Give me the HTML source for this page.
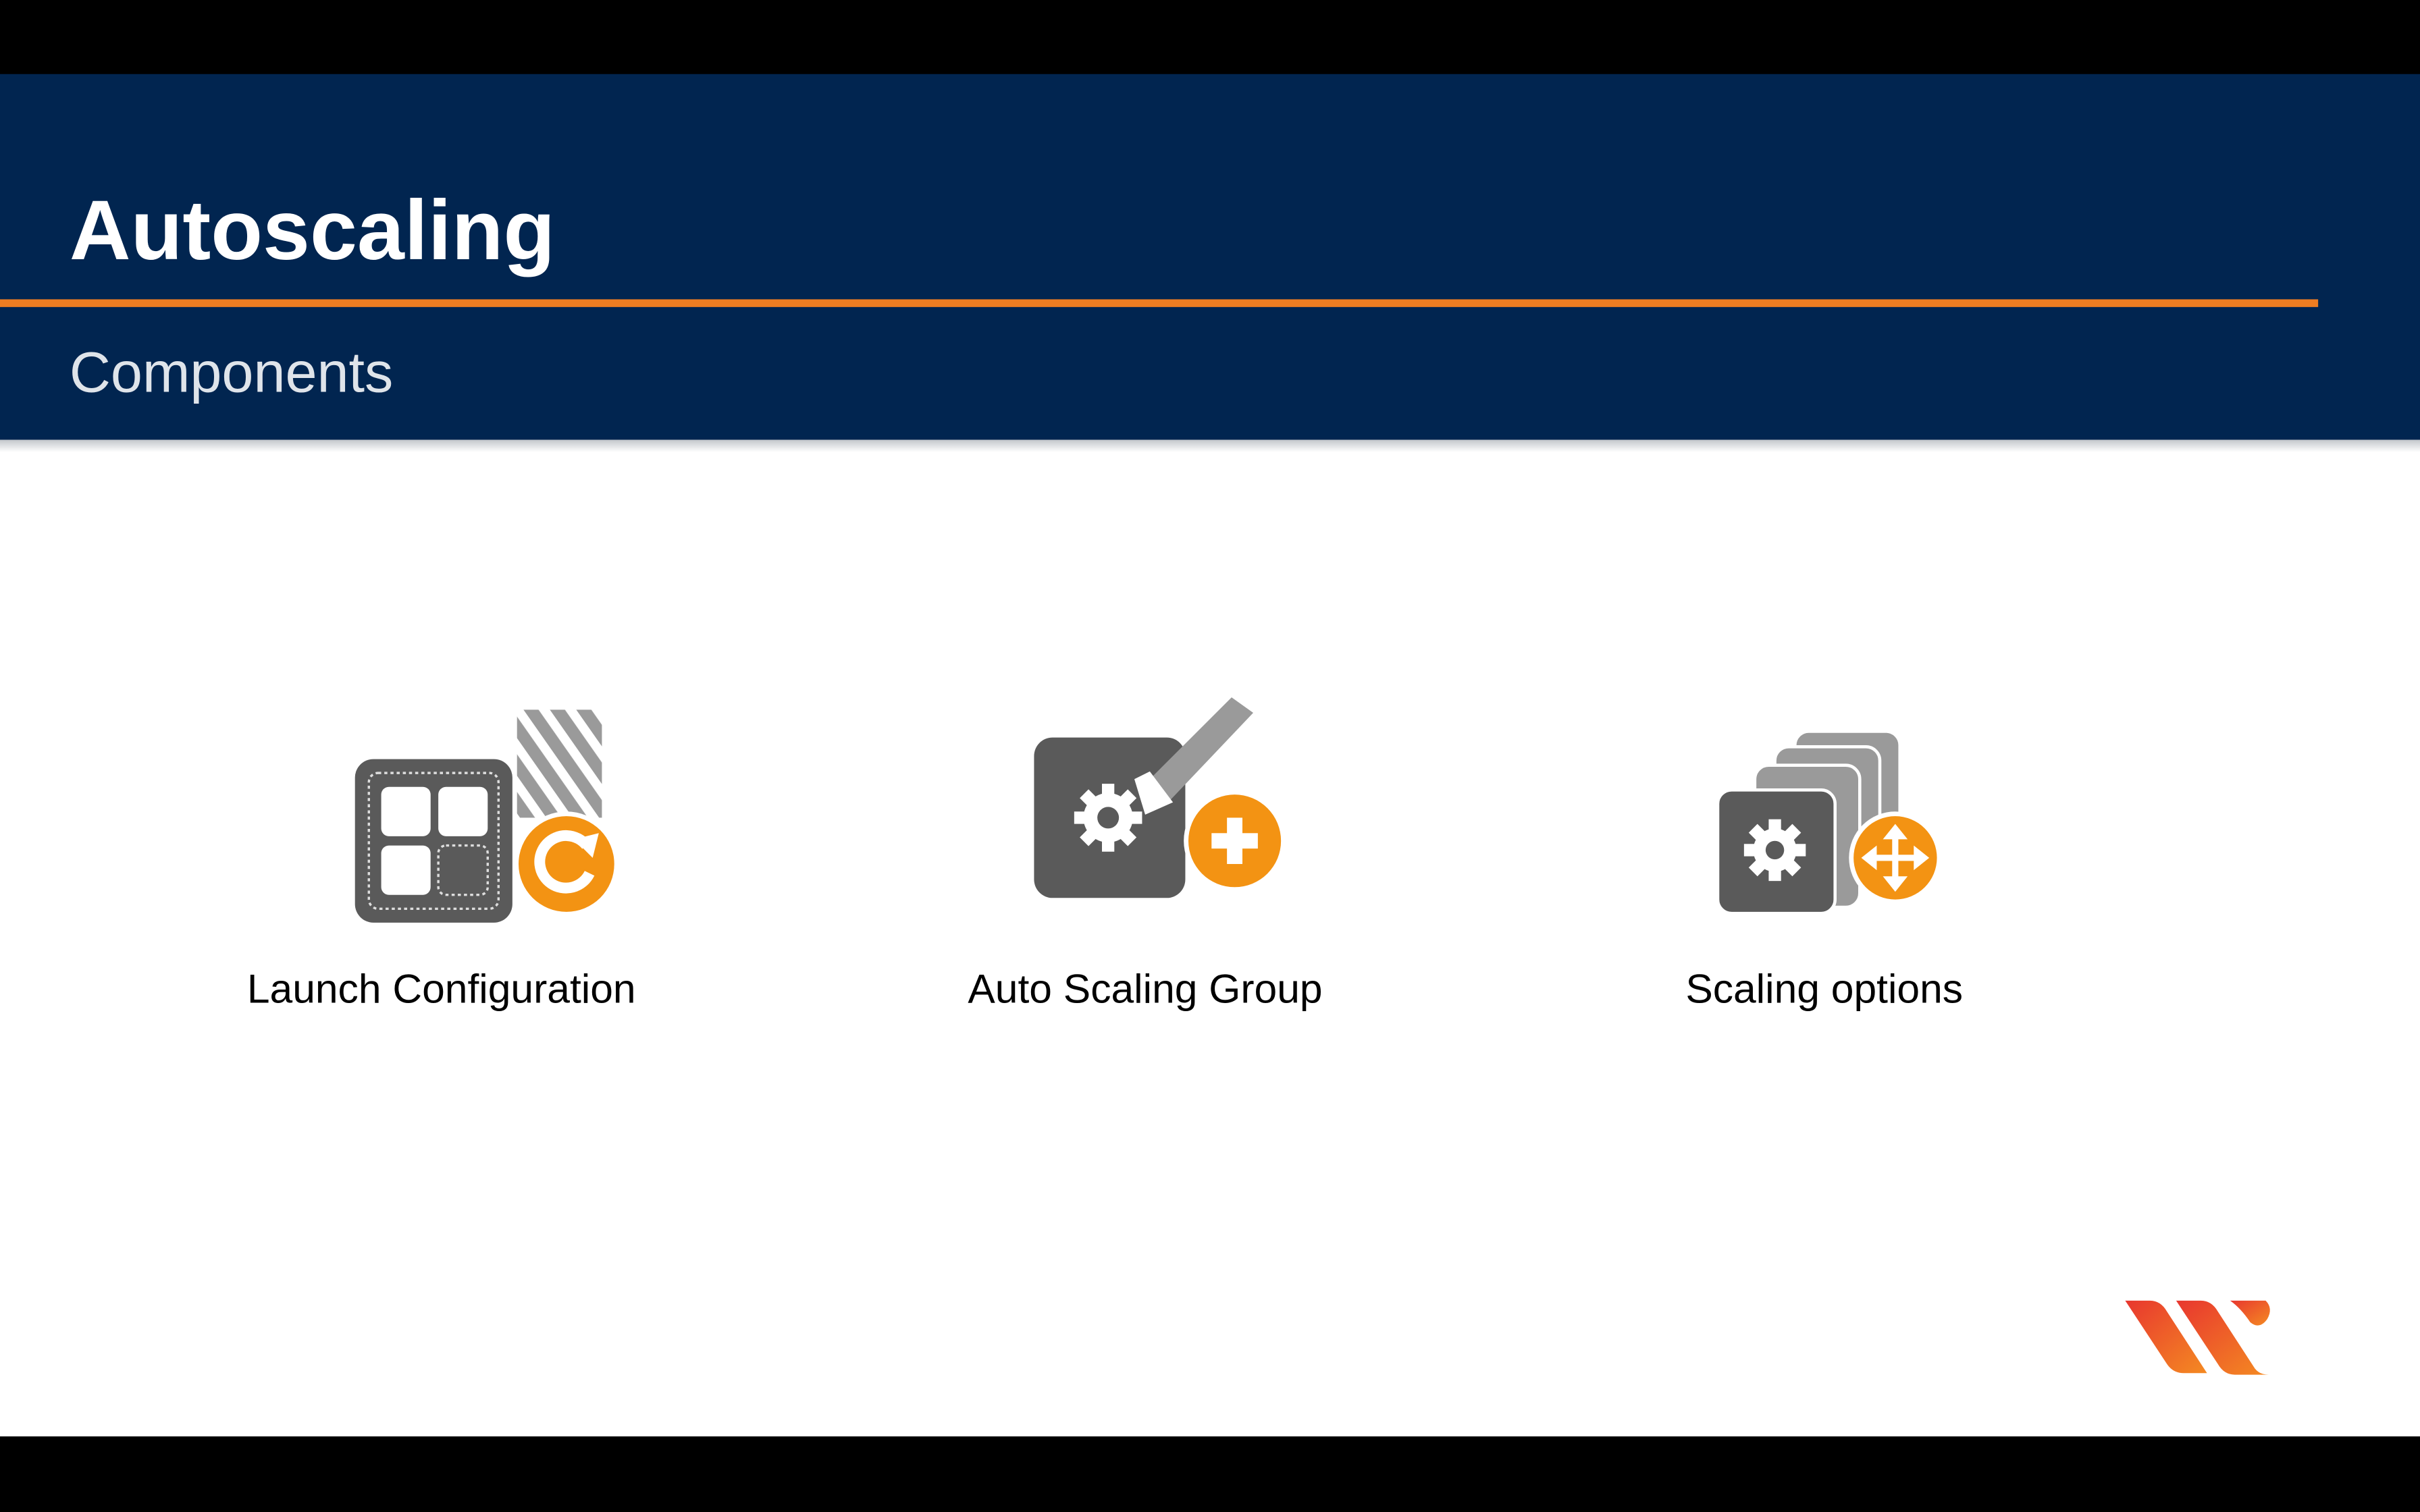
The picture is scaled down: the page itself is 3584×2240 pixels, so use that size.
<!DOCTYPE html>
<html><head><meta charset="utf-8"><style>
html,body{margin:0;padding:0;background:#000;}
svg{display:block}
</style></head><body>
<svg width="3584" height="2240" viewBox="0 0 1568 980" xmlns="http://www.w3.org/2000/svg">
<defs>
<linearGradient id="lg" x1="0" y1="0" x2="1" y2="1"><stop offset="0" stop-color="#e8372f"/><stop offset="1" stop-color="#f48a22"/></linearGradient>
<linearGradient id="sh" x1="0" y1="0" x2="0" y2="1"><stop offset="0" stop-color="#9aa0a8"/><stop offset="1" stop-color="#fff"/></linearGradient>
<pattern id="st" width="14" height="14" patternUnits="userSpaceOnUse" patternTransform="rotate(-35)"><rect width="14" height="14" fill="#fff"/><rect width="8" height="14" fill="#9a9a9a"/></pattern>
</defs>
<rect x="0" y="0" width="1568" height="980" fill="#000"/>
<rect x="0" y="285" width="1568" height="646" fill="#fff"/>
<rect x="0" y="285" width="1568" height="8" fill="url(#sh)" opacity="0.6"/>
<rect x="0" y="48" width="1568" height="237" fill="#012550"/>
<rect x="0" y="194" width="1502" height="5" fill="#ee7d22"/>
<text x="45" y="168" font-family="Liberation Sans, sans-serif" font-weight="bold" font-size="55" fill="#fff">Autoscaling</text>
<text x="45" y="254" font-family="Liberation Sans, sans-serif" font-size="37" fill="#dfe4ea">Components</text>

<!-- Icon 1 -->
<rect x="335" y="460" width="55" height="70" fill="url(#st)"/>
<rect x="230" y="492" width="102" height="106" rx="12" fill="#5a5a5a"/>
<rect x="239" y="501" width="84" height="88" rx="6" fill="none" stroke="#ddd" stroke-width="1.5" stroke-dasharray="2 2"/>
<rect x="247" y="510" width="32" height="32" rx="5" fill="#fff"/>
<rect x="284" y="510" width="32" height="32" rx="5" fill="#fff"/>
<rect x="247" y="548" width="32" height="32" rx="5" fill="#fff"/>
<rect x="284" y="548" width="32" height="32" rx="5" fill="none" stroke="#ddd" stroke-width="1.5" stroke-dasharray="2 2"/>
<circle cx="367" cy="560" r="34" fill="#fff"/>
<circle cx="367" cy="560" r="31" fill="#f39313"/>
<path d="M380 548 A17 17 0 1 0 382 566" fill="none" stroke="#fff" stroke-width="7"/>
<path d="M372 544 L388 540 L384 556 Z" fill="#fff"/>

<!-- Icon 2 -->
<rect x="670" y="478" width="98" height="104" rx="12" fill="#5a5a5a"/>
<path d="M740 510 L798 452 L812 462 L755 522 Z" fill="#9a9a9a"/>
<path d="M735 505 L745 500 L760 520 L742 528 Z" fill="#fff"/>
<g transform="translate(718 530)" fill="#fff">
<circle r="16"/>
<g><rect x="-4" y="-22" width="8" height="44"/><rect x="-22" y="-4" width="44" height="8"/><rect x="-4" y="-22" width="8" height="44" transform="rotate(45)"/><rect x="-4" y="-22" width="8" height="44" transform="rotate(-45)"/></g>
<circle r="7" fill="#5a5a5a"/>
</g>
<circle cx="800" cy="545" r="33" fill="#fff"/>
<circle cx="800" cy="545" r="30" fill="#f39313"/>
<rect x="795" y="530" width="10" height="30" fill="#fff"/>
<rect x="785" y="540" width="30" height="10" fill="#fff"/>

<!-- Icon 3 -->
<rect x="1163" y="474" width="68" height="90" rx="9" fill="#9a9a9a" stroke="#fff" stroke-width="2"/>
<rect x="1150" y="484" width="68" height="92" rx="9" fill="#9a9a9a" stroke="#fff" stroke-width="2"/>
<rect x="1137" y="496" width="68" height="92" rx="9" fill="#9a9a9a" stroke="#fff" stroke-width="2"/>
<rect x="1113" y="512" width="76" height="80" rx="9" fill="#5a5a5a" stroke="#fff" stroke-width="2"/>
<g transform="translate(1150 551)" fill="#fff">
<circle r="14"/>
<rect x="-4" y="-20" width="8" height="40"/><rect x="-20" y="-4" width="40" height="8"/><rect x="-4" y="-20" width="8" height="40" transform="rotate(45)"/><rect x="-4" y="-20" width="8" height="40" transform="rotate(-45)"/>
<circle r="6" fill="#5a5a5a"/>
</g>
<circle cx="1228" cy="556" r="30" fill="#fff"/>
<circle cx="1228" cy="556" r="27" fill="#f39313"/>
<g fill="#fff">
<path d="M1228 534 L1236 544 L1220 544 Z"/><path d="M1228 578 L1236 568 L1220 568 Z"/>
<path d="M1206 556 L1216 548 L1216 564 Z"/><path d="M1250 556 L1240 548 L1240 564 Z"/>
<rect x="1226" y="542" width="4" height="28"/><rect x="1214" y="554" width="28" height="4"/>
</g>

<g font-family="Liberation Sans, sans-serif" font-size="26.5" fill="#000" text-anchor="middle">
<text x="286" y="650">Launch Configuration</text>
<text x="742" y="650">Auto Scaling Group</text>
<text x="1182" y="650">Scaling options</text>
</g>

<!-- Logo -->
<g fill="url(#lg)">
<path d="M1377 843 L1393 843 Q1400 843 1404 850 L1430 890 L1415 890 Q1408 890 1404 884 Z"/>
<path d="M1410 843 L1426 843 Q1433 843 1437 850 L1461 887 Q1464 891 1470 891 L1448 891 Q1441 891 1437 884 Z"/>
<path d="M1445 843 L1468 843 Q1473 848 1469 855 Q1464 862 1458 857 Q1452 848 1445 843 Z"/>
</g>
</svg>
</body></html>
